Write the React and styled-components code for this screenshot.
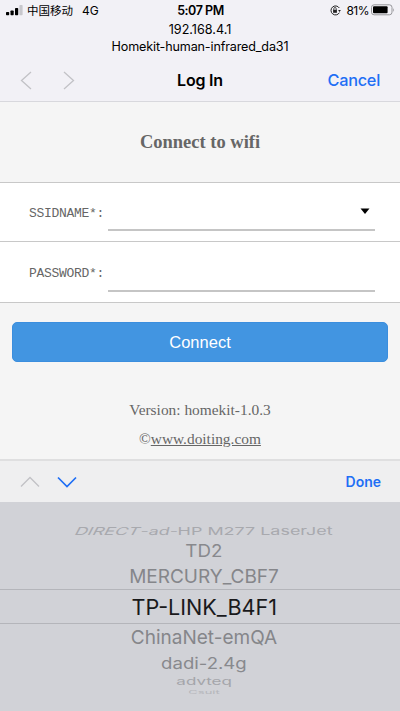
import React from 'react';
import styled, { createGlobalStyle } from 'styled-components';

const Global = createGlobalStyle`
  * { box-sizing: border-box; }
  body { margin: 0; background: #f5f5f5; font-family: Inter, "Noto Sans CJK SC", sans-serif; overflow: hidden; }
`;
const Screen = styled.div`
  width: 400px; height: 711px; display: flex; flex-direction: column; overflow: hidden;
  background: #f5f5f5; color: #000;
`;
const Header = styled.header`
  height: 102px; background: #f2f1f6; border-bottom: 1px solid #d8d8dd;
  display: flex; flex-direction: column;
`;
const StatusBar = styled.div`
  height: 20px; display: grid; grid-template-columns: 1fr auto 1fr; align-items: center;
  font-size: 12px; padding: 0 5px 0 6px;
`;
const StatusSide = styled.div`
  display: flex; align-items: center; height: 20px;
  justify-content: ${p => (p.$end ? 'flex-end' : 'flex-start')};
`;
const Carrier = styled.span`font-size: 11.5px; margin: 0 9px 0 4px;`;
const Time = styled.span`font-size: 12.5px; font-weight: 600; letter-spacing: -0.45px;`;
const Charge = styled.span`margin: 0 2px 0 5px; letter-spacing: -0.5px;`;
const Address = styled.div`
  font-size: 12.6px; line-height: 17px; text-align: center; padding-top: 1px; height: 38px;
`;
const NetworkName = styled.div`letter-spacing: -0.16px;`;
const NavBar = styled.nav`
  flex: 1; display: flex; align-items: center; padding: 0 20px 0 20px; height: 43px;
`;
const NavArrows = styled.div`flex: 1; display: flex; gap: 31px; padding-top: 2px;`;
const NavTitle = styled.h1`margin: 0; font-size: 16px; font-weight: 600; letter-spacing: -0.2px;`;
const Cancel = styled.button`
  flex: 1; border: 0; background: none; padding: 0; text-align: right;
  font: 500 16.3px Inter, sans-serif; letter-spacing: -0.25px; color: #1f6ff5;
`;
const Heading = styled.h2`
  margin: 0; height: 80px; text-align: center;
  font: bold 18.5px/80px "Liberation Serif", serif; color: #666;
`;
const Field = styled.label`
  height: ${p => p.$height}px; background: #fff; border-top: 1px solid #c8c8c8;
  display: flex; padding: ${p => p.$top}px 25px 0 29px;
  font: 13px/15px "Liberation Mono", monospace; color: #666;
`;
const FieldName = styled.span`width: 79px; padding-top: ${p => p.$drop}px; letter-spacing: -0.3px;`;
const Input = styled.span`
  flex: 1; height: 36px; border-bottom: 2px solid #c5c5c5; display: flex;
  justify-content: flex-end; padding: 13px 5px 0 0;
`;
const ConnectArea = styled.div`
  height: 78px; border-top: 1px solid #c8c8c8; padding: 19px 12px;
`;
const ConnectButton = styled.button`
  display: block; width: 100%; height: 40px; border: 1px solid #3b8ede; border-radius: 5px;
  background: #4295e1; color: #fff; font: 16.5px "Liberation Sans", sans-serif; padding: 1px 0 0;
`;
const Footer = styled.footer`
  height: 79px; padding-top: 15px; text-align: center;
  font: 15.4px/29px "Liberation Serif", serif; color: #666;
`;
const SiteLink = styled.a`text-decoration: underline;`;
const Accessory = styled.div`
  height: 43px; border-top: 2px solid #dfdfe0; background: #efeff0;
  display: flex; align-items: center; gap: 17px; padding: 0 19px 0 20px;
`;
const Done = styled.button`
  margin-left: auto; border: 0; background: none; padding: 0;
  font: 600 14px Inter, sans-serif; color: #1f6ff5;
`;
const Picker = styled.div`flex: 1; background: #d1d2d7; padding-top: 22px; overflow: hidden;`;
const Option = styled.div`
  height: ${p => p.$h}px; display: flex; align-items: center; justify-content: center;
  color: ${p => p.$color}; white-space: nowrap; padding-left: 8px;
  border: solid #b4b5ba; border-width: ${p => (p.$selected ? '1px 0' : '0')};
`;
const OptionText = styled.span`
  flex: none; font-size: ${p => p.$size}px; line-height: 1;
  transform: scaleX(${p => p.$stretch});
`;
const Slant = styled.span`display: inline-block; transform: skewX(-${p => p.$angle}deg);`;

const Chevron = ({ d, w = 12, h = 19, color = '#c2c2c6', width = 1.3 }) => (
  <svg width={w} height={h} viewBox={`0 0 ${w} ${h}`} fill="none" stroke={color} strokeWidth={width}>
    <path d={d} />
  </svg>
);
const Signal = () => (
  <svg width="17" height="11" viewBox="0 0 17 11">
    <rect x="0" y="7" width="3.2" height="3.2" rx=".7" />
    <rect x="4.5" y="5.5" width="3.2" height="4.7" rx=".7" />
    <rect x="9" y="3" width="3.2" height="7.2" rx=".7" />
    <rect x="13.4" y="0" width="3.2" height="10.2" rx=".7" fill="#c7c7cc" />
  </svg>
);
const RotationLock = () => (
  <svg width="11" height="11" viewBox="0 0 11 11" fill="none" stroke="#222">
    <path d="M9.3 3A4.5 4.5 0 1 0 9.4 7.7" strokeWidth="1" />
    <path d="M8.1 5h2.8L9.5 7z" fill="#222" stroke="none" />
    <rect x="3.1" y="4.8" width="3.8" height="3" fill="#222" stroke="none" />
    <path d="M3.8 5V3.7a1.2 1.2 0 0 1 2.4 0V5" strokeWidth=".8" />
  </svg>
);
const Battery = () => (
  <svg width="24" height="12" viewBox="0 0 24 12">
    <rect x=".5" y=".8" width="20.5" height="10" rx="2.6" fill="none" stroke="#96969a" />
    <rect x="2" y="2.3" width="14.6" height="7" rx="1" />
    <path d="M22.2 4v4Q24 6 22.2 4" fill="#96969a" />
  </svg>
);

const options = [
  { text: 'TD2', h: 26, size: 17, stretch: 1.1, color: '#88898d' },
  { text: 'MERCURY_CBF7', h: 25, size: 19, stretch: 1, color: '#85868a' },
  { text: 'TP-LINK_B4F1', h: 35, size: 22, stretch: 0.98, color: '#19191b', selected: true },
  { text: 'ChinaNet-emQA', h: 26, size: 19, stretch: 1, color: '#85868a' },
  { text: 'dadi-2.4g', h: 26, size: 16, stretch: 1.16, color: '#88898d' },
  { text: 'advteq', h: 13, size: 10.5, stretch: 1.62, color: '#a4a5aa' },
  { text: 'Csuit', h: 6, size: 5, stretch: 2.6, color: '#b5b6bb' },
];

export default function App() {
  return (
    <Screen>
      <Global />
      <Header>
        <StatusBar>
          <StatusSide><Signal /><Carrier>中国移动</Carrier>4G</StatusSide>
          <Time>5:07 PM</Time>
          <StatusSide $end><RotationLock /><Charge>81%</Charge><Battery /></StatusSide>
        </StatusBar>
        <Address>192.168.4.1<NetworkName>Homekit-human-infrared_da31</NetworkName></Address>
        <NavBar>
          <NavArrows>
            <Chevron d="M11 1L1.5 9.5L11 18" />
            <Chevron d="M1 1L10.5 9.5L1 18" />
          </NavArrows>
          <NavTitle>Log In</NavTitle>
          <Cancel>Cancel</Cancel>
        </NavBar>
      </Header>
      <Heading>Connect to wifi</Heading>
      <Field $height={59} $top={12}>
        <FieldName $drop={11}>SSIDNAME*:</FieldName>
        <Input><svg width="10" height="7" viewBox="0 0 10 7"><path d="M.5.5h9L5 6z" /></svg></Input>
      </Field>
      <Field $height={61} $top={14}>
        <FieldName $drop={10}>PASSWORD*:</FieldName>
        <Input />
      </Field>
      <ConnectArea><ConnectButton>Connect</ConnectButton></ConnectArea>
      <Footer>
        <div>Version: homekit-1.0.3</div>
        <div>©<SiteLink>www.doiting.com</SiteLink></div>
      </Footer>
      <Accessory>
        <Chevron w={20} h={12} d="M1 10.5L10 1.5L19 10.5" />
        <Chevron w={20} h={12} d="M1 1.5L10 10.5L19 1.5" color="#1f6ff5" width={1.7} />
        <Done>Done</Done>
      </Accessory>
      <Picker>
        <Option $h={14} $color="#a8a9ae">
          <OptionText $size={11} $stretch={1.63}>
            <Slant $angle={18}>DIRECT</Slant><Slant $angle={8}>-ad-</Slant>HP M277 LaserJet
          </OptionText>
        </Option>
        {options.map(o => (
          <Option key={o.text} $h={o.h} $color={o.color} $selected={o.selected}>
            <OptionText $size={o.size} $stretch={o.stretch}>{o.text}</OptionText>
          </Option>
        ))}
      </Picker>
    </Screen>
  );
}
